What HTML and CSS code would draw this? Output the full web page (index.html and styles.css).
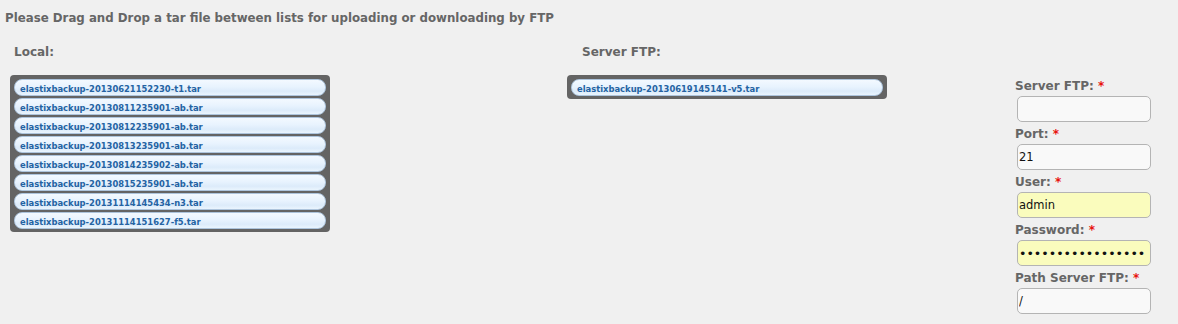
FILE: index.html
```html
<!DOCTYPE html>
<html>
<head>
<meta charset="utf-8">
<link rel="stylesheet" href="styles.css">
</head>
<body>
<div class="title">Please Drag and Drop a tar file between lists for uploading or downloading by FTP</div>
<div class="cols">
  <div class="col col-local">
    <div class="col-label">Local:</div>
    <ul class="list">
      <li class="item">elastixbackup-20130621152230-t1.tar</li>
      <li class="item">elastixbackup-20130811235901-ab.tar</li>
      <li class="item">elastixbackup-20130812235901-ab.tar</li>
      <li class="item">elastixbackup-20130813235901-ab.tar</li>
      <li class="item">elastixbackup-20130814235902-ab.tar</li>
      <li class="item">elastixbackup-20130815235901-ab.tar</li>
      <li class="item">elastixbackup-20131114145434-n3.tar</li>
      <li class="item">elastixbackup-20131114151627-f5.tar</li>
    </ul>
  </div>
  <div class="col col-server">
    <div class="col-label">Server FTP:</div>
    <ul class="list">
      <li class="item">elastixbackup-20130619145141-v5.tar</li>
    </ul>
  </div>
  <form class="form">
    <label class="field-label">Server FTP: <span class="req">*</span></label>
    <input class="field" type="text" value="">
    <label class="field-label">Port: <span class="req">*</span></label>
    <input class="field" type="text" value="21">
    <label class="field-label">User: <span class="req">*</span></label>
    <input class="field filled" type="text" value="admin">
    <label class="field-label">Password: <span class="req">*</span></label>
    <input class="field filled pw" type="password" value="xxxxxxxxxxxxxxxxx">
    <label class="field-label">Path Server FTP: <span class="req">*</span></label>
    <input class="field" type="text" value="/">
  </form>
</div>
</body>
</html>
```

FILE: styles.css
```css
html, body {
  margin: 0;
  background: #f0f0f0;
}
body {
  padding: 12px 5px 0 5px;
  font-family: "DejaVu Sans", Verdana, sans-serif;
  color: #666666;
}
.title {
  font-size: 11.8px;
  font-weight: bold;
  line-height: 13px;
}
.cols {
  display: grid;
  grid-template-columns: 557px 448px 1fr;
  padding-left: 5px;
  margin-top: 20px;
  align-items: start;
}
.col-label {
  font-size: 12px;
  font-weight: bold;
  line-height: 14px;
  margin-bottom: 16px;
}
.col-local .col-label { padding-left: 4px; }
.col-server .col-label { padding-left: 15px; }
.list {
  list-style: none;
  margin: 0;
  padding: 4px 4px 3px 4px;
  width: 312px;
  background: #646464;
  border-radius: 4px;
  display: flex;
  flex-direction: column;
  gap: 2px;
}
.item {
  box-sizing: border-box;
  height: 17px;
  padding: 4px 5px 0 5px;
  line-height: 11px;
  font-size: 8.4px;
  font-weight: bold;
  color: #2463a3;
  border: 1px solid #adc4dc;
  border-radius: 8px;
  background: linear-gradient(#f3f9ff 0%, #e8f3fe 45%, #dcebfa 75%, #eaf5fe 100%);
  white-space: nowrap;
}
.form {
  display: flex;
  flex-direction: column;
  align-items: flex-start;
  margin: 34px 0 0 0;
}
.field-label {
  font-size: 12px;
  font-weight: bold;
  line-height: 14px;
  margin-bottom: 3px;
}
.req {
  color: #e8120c;
}
.field {
  box-sizing: border-box;
  width: 134px;
  height: 26px;
  margin: 0 0 5px 2px;
  padding: 0 1px;
  border: 1px solid #b4b4b4;
  border-radius: 5px;
  background: #f9f9f9;
  font-family: "DejaVu Sans", sans-serif;
  font-size: 11.5px;
  color: #111111;
  outline: none;
}
.field.filled {
  background: #fafcbd;
}
.field.pw {
  font-size: 12.6px;
}
```
